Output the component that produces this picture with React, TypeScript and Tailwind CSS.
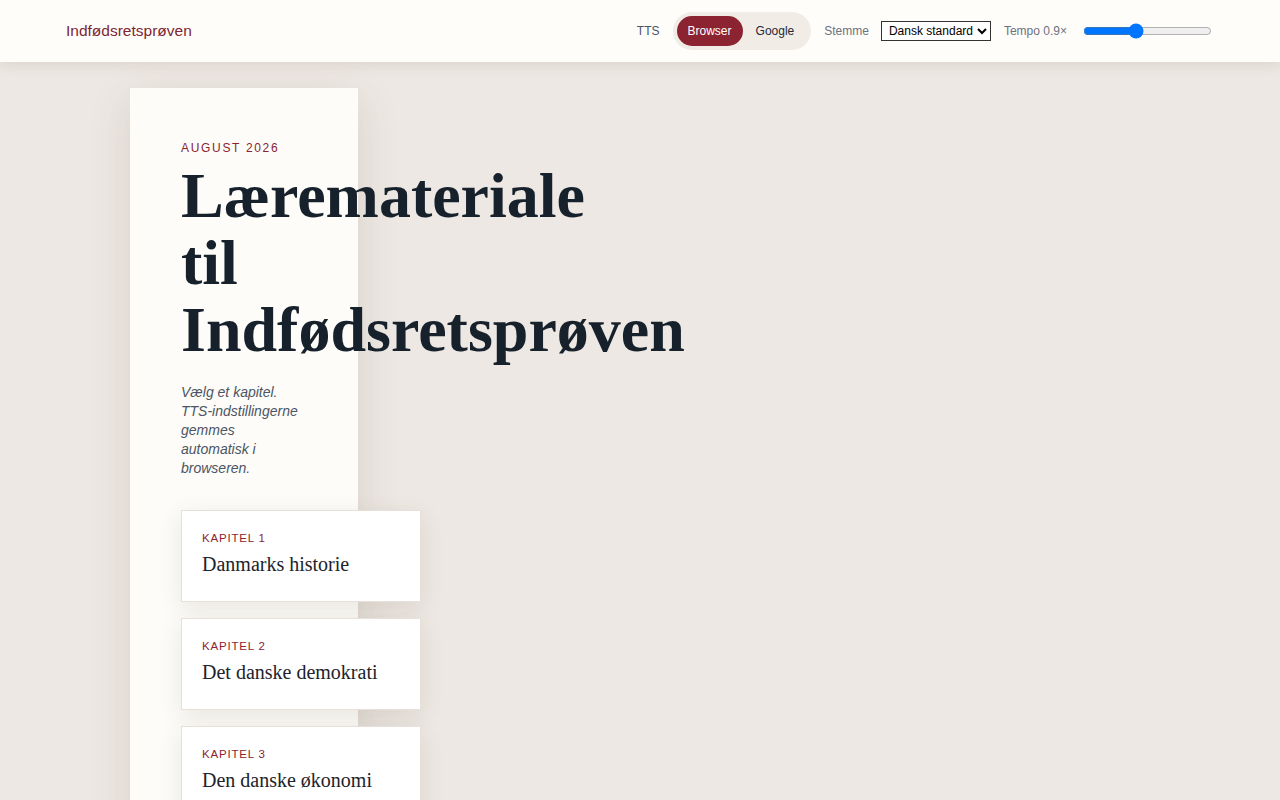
import { useState } from 'react';

const SANS = "font-['Liberation_Sans','Arial',sans-serif]";
const SERIF = "font-['Liberation_Serif','Times_New_Roman',serif]";

const chapters = [
  { n: 1, title: 'Danmarks historie' },
  { n: 2, title: 'Det danske demokrati' },
  { n: 3, title: 'Den danske økonomi' },
  { n: 4, title: 'Danmark i verden' },
];

function Header() {
  const [engine, setEngine] = useState<'browser' | 'google'>('browser');
  const [rate, setRate] = useState(0.9);

  return (
    <header className="relative z-10 flex h-[62px] items-center justify-between bg-[#fffdfa] pl-[66px] pr-[68px] shadow-[0_2px_14px_rgba(80,60,40,0.12)]">
      <a href="#" className="text-[15.5px] text-[#7d2632]">
        Indfødsretsprøven
      </a>
      <div className="flex items-center gap-[13px] text-[12px]">
        <span className="text-[#4b5563]">TTS</span>
        <div className="flex items-center rounded-full bg-[#f1ece6] p-1">
          <button
            onClick={() => setEngine('browser')}
            className={
              engine === 'browser'
                ? 'h-[30px] rounded-full bg-[#8b2330] px-[11px] text-white'
                : 'h-[30px] rounded-full px-[13px] text-[#1f2937]'
            }
          >
            Browser
          </button>
          <button
            onClick={() => setEngine('google')}
            className={
              engine === 'google'
                ? 'h-[30px] rounded-full bg-[#8b2330] px-[11px] text-white'
                : 'h-[30px] rounded-full px-[13px] text-[#1f2937]'
            }
          >
            Google
          </button>
        </div>
        <label className="flex items-center gap-3 text-[#6b7280]">
          Stemme
          <select className="h-[20px] border border-[#333] bg-white pl-[3px] text-[12px] text-black">
            <option>Dansk standard</option>
          </select>
        </label>
        <label className="flex items-center gap-[16px] text-[#6b7280]">
          Tempo {rate.toFixed(1)}×
          <input
            type="range"
            min={0.5}
            max={1.5}
            step={0.1}
            value={rate}
            onChange={(e) => setRate(Number(e.target.value))}
            className="w-[129px]"
          />
        </label>
      </div>
    </header>
  );
}

export default function App() {
  return (
    <div className={`min-h-screen overflow-hidden bg-[#ede8e3] ${SANS}`}>
      <Header />
      <main className="pt-[26px]">
        <section className="ml-[130px] w-[228px] bg-[#fdfcf9] px-[51px] pb-16 pt-[52px] shadow-[0_12px_40px_rgba(90,70,50,0.14)]">
          <p className="text-[12px] leading-4 tracking-[0.14em] text-[#8b2330]">AUGUST 2026</p>
          <h1 className={`mt-[6px] text-[64px] font-bold leading-[1.05] text-[#17212b] ${SERIF}`}>
            Læremateriale til Indfødsretsprøven
          </h1>
          <p className="mt-[19px] w-[120px] text-[14px] italic leading-[19px] text-[#4b5563]">
            Vælg et kapitel. TTS-indstillingerne gemmes automatisk i browseren.
          </p>
          {/* cards are wider than the column and simply spill over it */}
          <ul className="mt-[32px] flex flex-col gap-4">
            {chapters.map((c) => (
              <li key={c.n}>
                <a
                  href="#"
                  className="block h-[92px] w-[240px] border border-[#e6e0d9] bg-white px-5 pt-[19px] shadow-[0_6px_22px_rgba(90,70,50,0.12)]"
                >
                  <span className="block text-[11.5px] leading-4 tracking-[0.07em] text-[#8b2330]">
                    KAPITEL {c.n}
                  </span>
                  <span className={`mt-[4px] block text-[20px] leading-[28px] text-[#1c232b] ${SERIF}`}>
                    {c.title}
                  </span>
                </a>
              </li>
            ))}
          </ul>
        </section>
      </main>
    </div>
  );
}
